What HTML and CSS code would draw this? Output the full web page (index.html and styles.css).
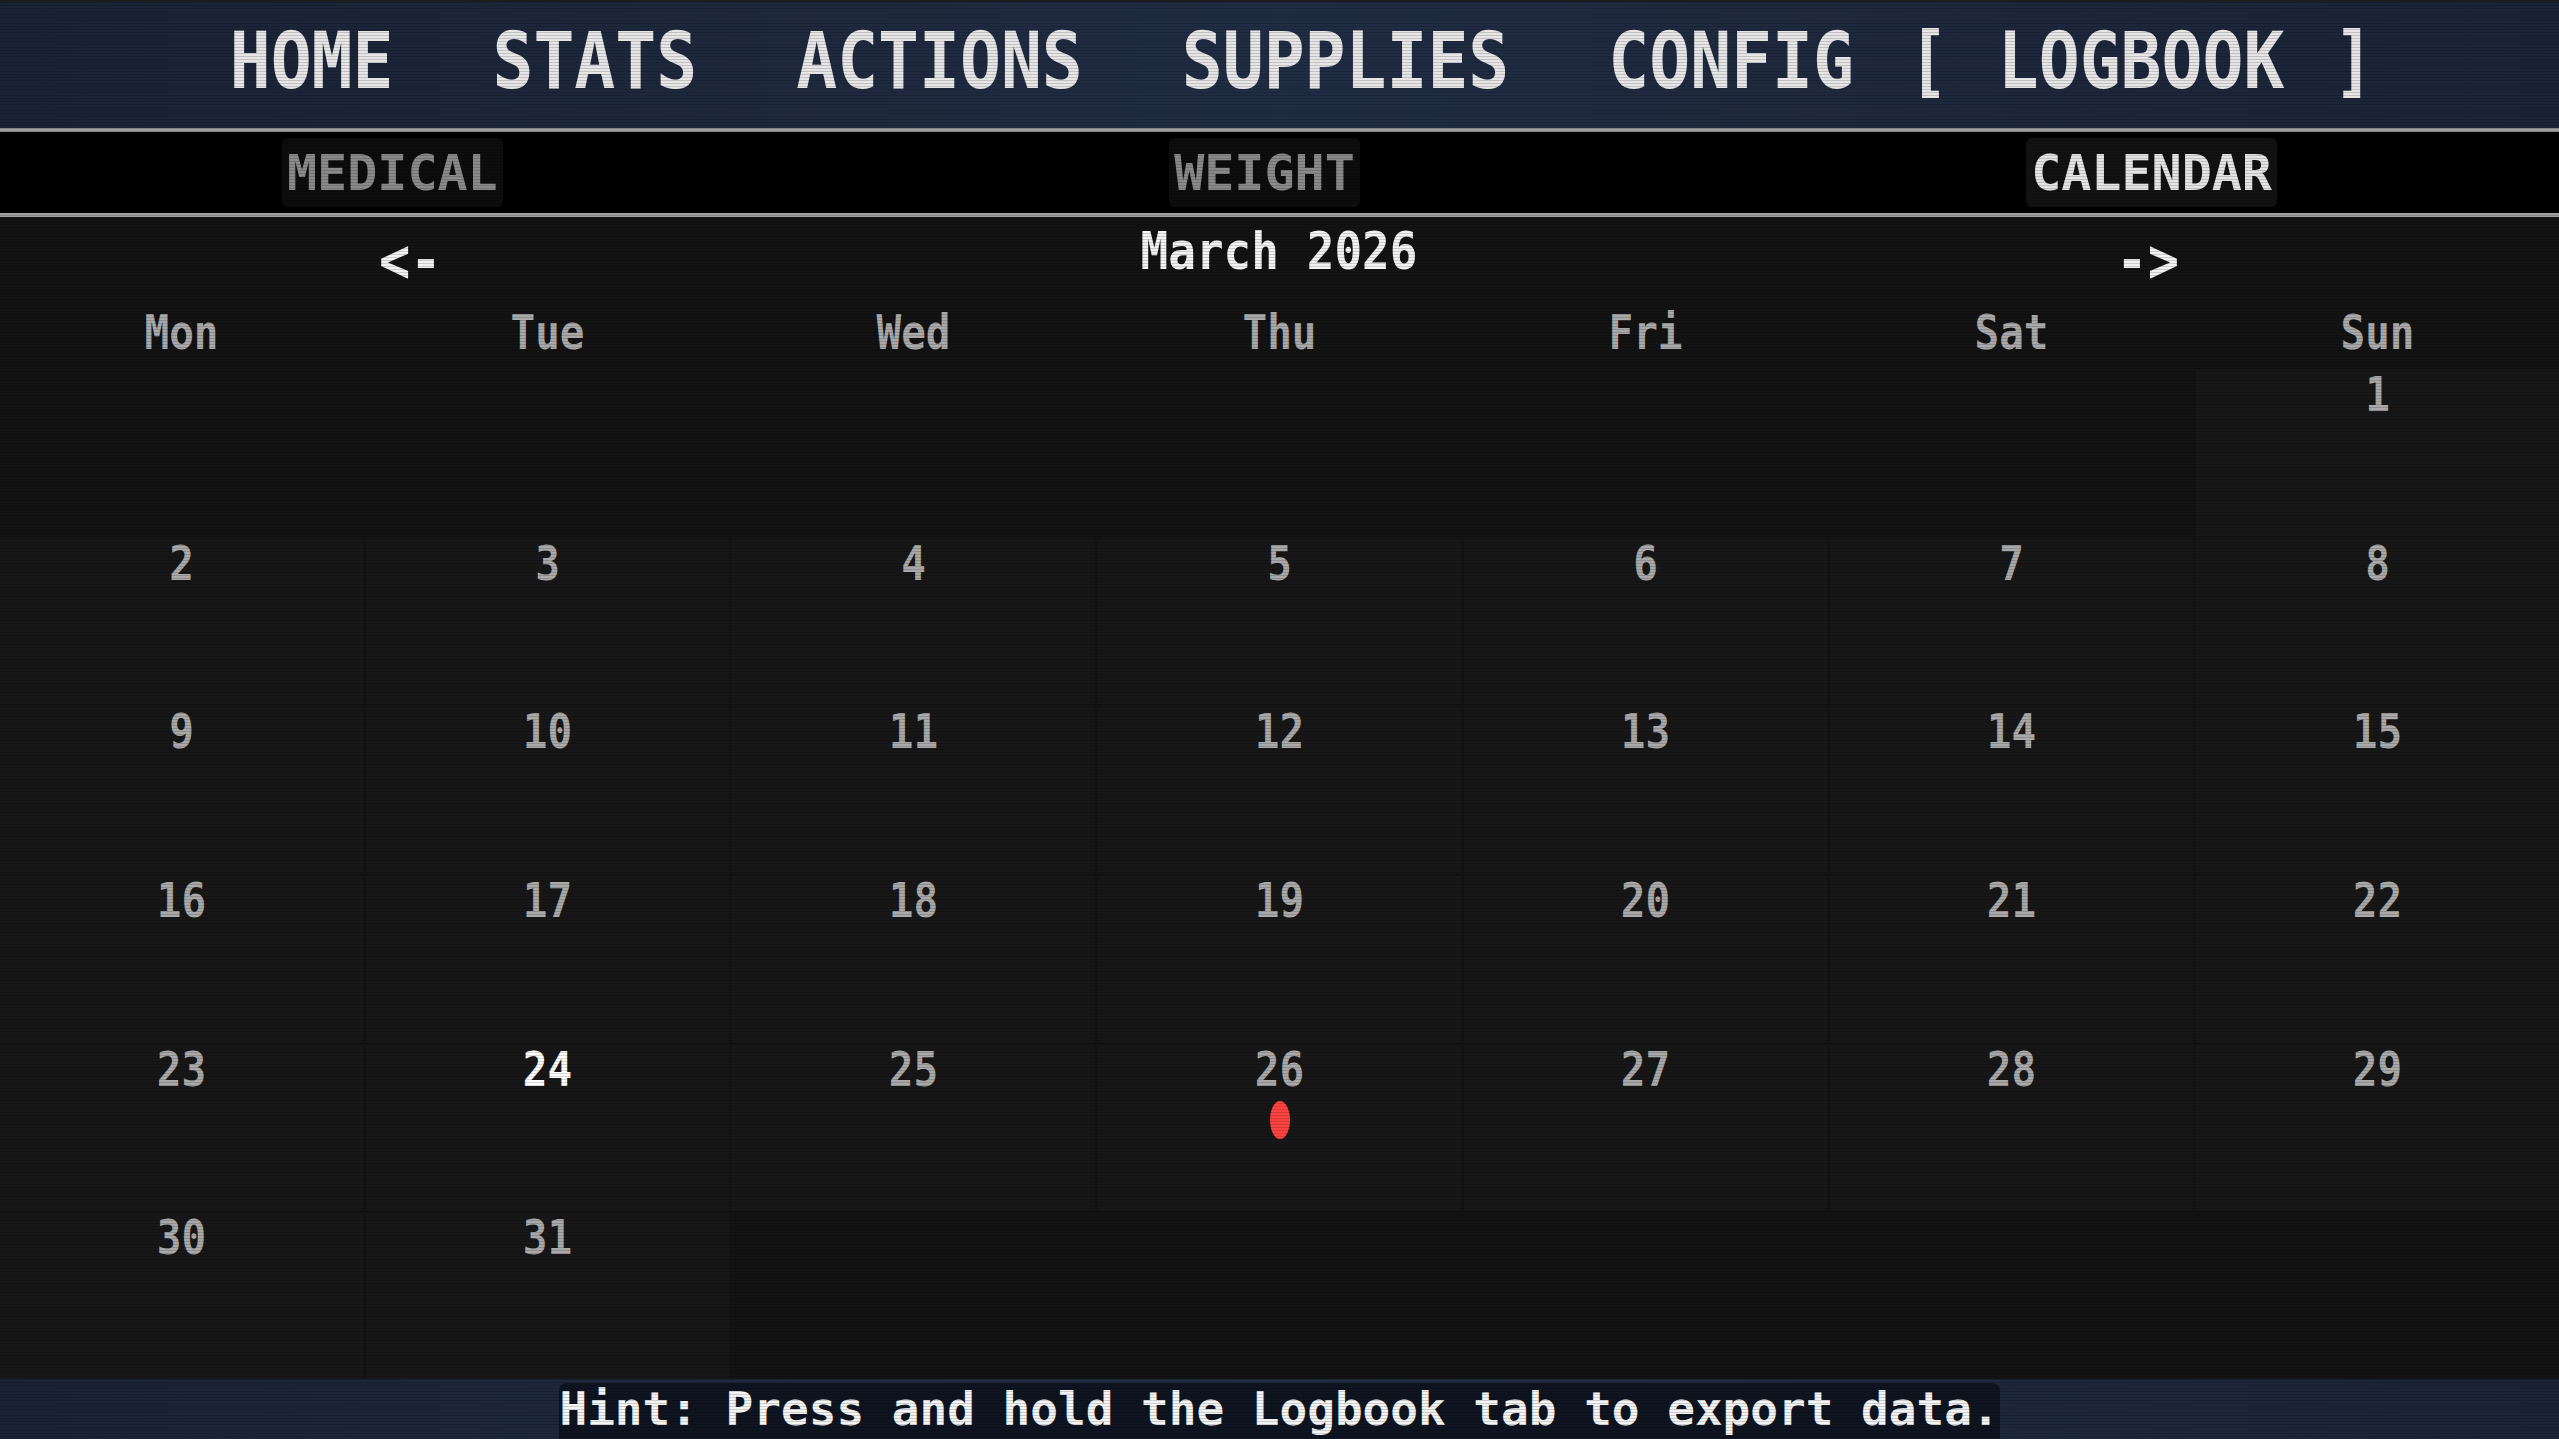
FILE: index.html
```html
<!DOCTYPE html>
<html lang="en">
<head>
    <meta charset="UTF-8">
    <meta name="viewport" content="width=device-width, initial-scale=1.0">
    <title>Logbook - Calendar</title>
    <link rel="stylesheet" href="styles.css">
</head>
<body>
    <nav class="main-nav">
        <span class="nav-item">HOME</span>
        <span class="nav-item">STATS</span>
        <span class="nav-item">ACTIONS</span>
        <span class="nav-item">SUPPLIES</span>
        <span class="nav-item">CONFIG</span>
        <span class="nav-item active">[ LOGBOOK ]</span>
    </nav>

    <div class="sub-nav">
        <span class="sub-tab">MEDICAL</span>
        <span class="sub-tab">WEIGHT</span>
        <span class="sub-tab active">CALENDAR</span>
    </div>

    <main class="calendar">
        <div class="month-nav">
            <span class="month-arrow">&lt;-</span>
            <span class="month-title">March 2026</span>
            <span class="month-arrow">-&gt;</span>
        </div>

        <div class="weekdays">
            <span>Mon</span><span>Tue</span><span>Wed</span><span>Thu</span><span>Fri</span><span>Sat</span><span>Sun</span>
        </div>

        <div class="days">
            <div class="day empty"></div>
            <div class="day empty"></div>
            <div class="day empty"></div>
            <div class="day empty"></div>
            <div class="day empty"></div>
            <div class="day empty"></div>
            <div class="day"><span class="day-num">1</span></div>

            <div class="day"><span class="day-num">2</span></div>
            <div class="day"><span class="day-num">3</span></div>
            <div class="day"><span class="day-num">4</span></div>
            <div class="day"><span class="day-num">5</span></div>
            <div class="day"><span class="day-num">6</span></div>
            <div class="day"><span class="day-num">7</span></div>
            <div class="day"><span class="day-num">8</span></div>

            <div class="day"><span class="day-num">9</span></div>
            <div class="day"><span class="day-num">10</span></div>
            <div class="day"><span class="day-num">11</span></div>
            <div class="day"><span class="day-num">12</span></div>
            <div class="day"><span class="day-num">13</span></div>
            <div class="day"><span class="day-num">14</span></div>
            <div class="day"><span class="day-num">15</span></div>

            <div class="day"><span class="day-num">16</span></div>
            <div class="day"><span class="day-num">17</span></div>
            <div class="day"><span class="day-num">18</span></div>
            <div class="day"><span class="day-num">19</span></div>
            <div class="day"><span class="day-num">20</span></div>
            <div class="day"><span class="day-num">21</span></div>
            <div class="day"><span class="day-num">22</span></div>

            <div class="day"><span class="day-num">23</span></div>
            <div class="day today"><span class="day-num">24</span></div>
            <div class="day"><span class="day-num">25</span></div>
            <div class="day"><span class="day-num">26</span><span class="entry-dot"></span></div>
            <div class="day"><span class="day-num">27</span></div>
            <div class="day"><span class="day-num">28</span></div>
            <div class="day"><span class="day-num">29</span></div>

            <div class="day"><span class="day-num">30</span></div>
            <div class="day"><span class="day-num">31</span></div>
            <div class="day empty"></div>
            <div class="day empty"></div>
            <div class="day empty"></div>
            <div class="day empty"></div>
            <div class="day empty"></div>
        </div>
    </main>

    <footer class="hint-bar">
        <span class="hint">Hint: Press and hold the Logbook tab to export data.</span>
    </footer>

    <div class="scanlines"></div>
</body>
</html>
```

FILE: styles.css
```css
:root {
    --navy: #1f2a3e;
    --screen: #131313;
    --cell: #171717;
    --rule: #9e9e9e;
    --text: #a9a9a9;
    --bright: #f2f2f2;
}

* {
    box-sizing: border-box;
    margin: 0;
    padding: 0;
}

body {
    height: 100vh;
    display: flex;
    flex-direction: column;
    background-color: var(--screen);
    color: var(--text);
    font-family: 'DejaVu Sans Mono', 'Liberation Mono', monospace;
    font-weight: bold;
    overflow: hidden;
}

/* top menu */
.main-nav {
    height: 132px;
    display: flex;
    justify-content: center;
    align-items: center;
    gap: 9px;
    padding-bottom: 6px;
    background: linear-gradient(90deg, #1a2334 0%, #212d44 50%, #1b2436 100%);
    border-top: 2px solid #1d1d1d;
    border-bottom: 4px solid var(--rule);
}

.nav-item {
    display: inline-block;
    padding: 0 45px;
    font-size: 68px;
    line-height: 1;
    color: #e6e6e6;
    transform: scaleY(1.15);
}

.nav-item.active {
    padding: 0;
    word-spacing: 8px;
}

/* logbook tabs */
.sub-nav {
    height: 85px;
    display: flex;
    justify-content: space-between;
    align-items: center;
    padding: 0 282px;
    background-color: #000;
    border-bottom: 4px solid var(--rule);
}

.sub-tab {
    height: 69px;
    display: flex;
    align-items: center;
    padding: 0 5px;
    font-size: 50px;
    color: #8a8a8a;
    background-color: #0d0d0d;
    border-radius: 6px;
}

.sub-tab.active {
    color: #e4e4e4;
    background-color: #121212;
}

/* calendar */
.calendar {
    flex: 1;
    display: flex;
    flex-direction: column;
}

.month-nav {
    height: 97px;
    display: flex;
    justify-content: space-between;
    align-items: flex-start;
    padding: 11px 380px 0 379px;
}

.month-title {
    display: inline-block;
    font-size: 46px;
    line-height: 1;
    color: var(--bright);
    transform: scaleY(1.13);
}

.month-arrow {
    display: inline-block;
    margin-top: 6px;
    font-size: 52px;
    line-height: 1;
    color: var(--bright);
    transform: scaleY(1.2);
}

.weekdays {
    height: 56px;
    display: grid;
    grid-template-columns: repeat(7, 1fr);
    gap: 3px;
    text-align: center;
    font-size: 41px;
    line-height: 1;
}

.weekdays span {
    display: inline-block;
    transform: scaleY(1.17);
}

.days {
    flex: 1;
    display: grid;
    grid-template-columns: repeat(7, 1fr);
    grid-template-rows: repeat(6, 1fr);
    gap: 3px;
}

.day {
    display: flex;
    flex-direction: column;
    align-items: center;
    padding-top: 5px;
    background-color: var(--cell);
}

.day.empty {
    background-color: transparent;
}

.day-num {
    display: inline-block;
    font-size: 41px;
    line-height: 1;
    transform: scaleY(1.17);
}

.day.today .day-num {
    color: #fff;
}

.entry-dot {
    width: 20px;
    height: 38px;
    margin-top: 10px;
    background-color: #ff4242;
    border-radius: 50%;
}

/* bottom hint */
.hint-bar {
    height: 60px;
    display: flex;
    justify-content: center;
    align-items: flex-end;
    background: linear-gradient(90deg, #1a2334 0%, #212d44 50%, #1b2436 100%);
}

.hint {
    height: 56px;
    padding: 3px 0 0;
    font-size: 46px;
    line-height: 1;
    color: #f4f4f4;
    background-color: #0e1420;
    border-radius: 8px 8px 0 0;
}

.scanlines {
    position: fixed;
    inset: 0;
    pointer-events: none;
    background: repeating-linear-gradient(to bottom, rgba(0, 0, 0, 0) 0, rgba(0, 0, 0, 0) 2px, rgba(0, 0, 0, 0.16) 2px, rgba(0, 0, 0, 0.16) 3px);
}
```
